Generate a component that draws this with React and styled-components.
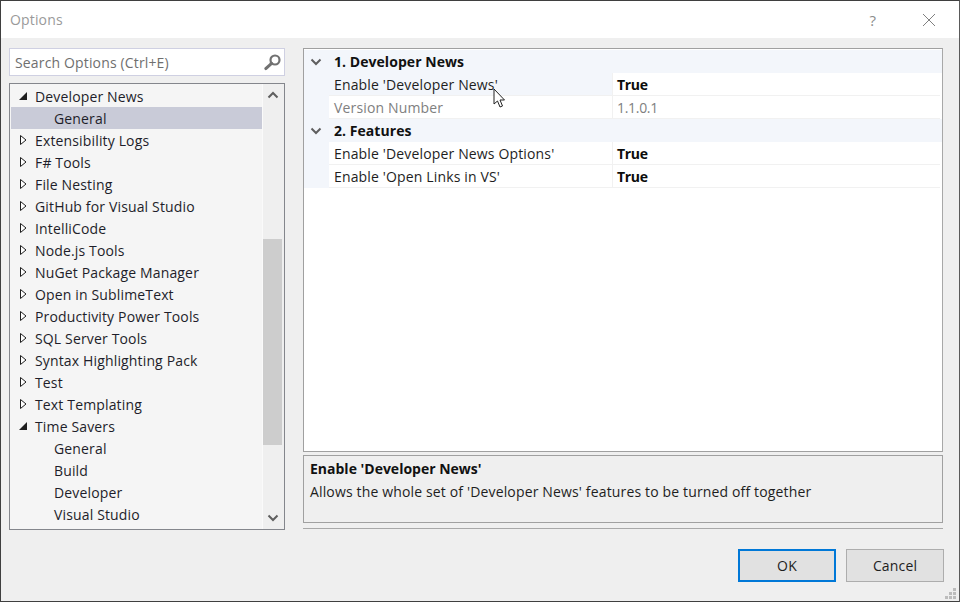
import React from 'react'
import styled, { createGlobalStyle } from 'styled-components'

const GlobalStyle = createGlobalStyle`
  html, body { margin: 0; padding: 0; background: #efefef; }
  * { box-sizing: border-box; }
`

const treeItems = [
  { label: 'Developer News', state: 'open' },
  { label: 'General', child: true, selected: true },
  { label: 'Extensibility Logs', state: 'closed' },
  { label: 'F# Tools', state: 'closed' },
  { label: 'File Nesting', state: 'closed' },
  { label: 'GitHub for Visual Studio', state: 'closed' },
  { label: 'IntelliCode', state: 'closed' },
  { label: 'Node.js Tools', state: 'closed' },
  { label: 'NuGet Package Manager', state: 'closed' },
  { label: 'Open in SublimeText', state: 'closed' },
  { label: 'Productivity Power Tools', state: 'closed' },
  { label: 'SQL Server Tools', state: 'closed' },
  { label: 'Syntax Highlighting Pack', state: 'closed' },
  { label: 'Test', state: 'closed' },
  { label: 'Text Templating', state: 'closed' },
  { label: 'Time Savers', state: 'open' },
  { label: 'General', child: true },
  { label: 'Build', child: true },
  { label: 'Developer', child: true },
  { label: 'Visual Studio', child: true },
]

const sections = [
  {
    title: '1. Developer News',
    rows: [
      { name: "Enable 'Developer News'", value: 'True', active: true },
      { name: 'Version Number', value: '1.1.0.1', muted: true },
    ],
  },
  {
    title: '2. Features',
    rows: [
      { name: "Enable 'Developer News Options'", value: 'True' },
      { name: "Enable 'Open Links in VS'", value: 'True' },
    ],
  },
]

const Dialog = styled.div`
  position: relative;
  width: 960px;
  height: 602px;
  display: flex;
  flex-direction: column;
  overflow: hidden;
  background: #efefef;
  border: 1px solid #3f3f3f;
  border-right-color: #5a5a5a;
  font-family: "Open Sans", "Liberation Sans", sans-serif;
  font-size: 14px;
  letter-spacing: 0.15px;
  color: #1e1e1e;
`

const TitleBar = styled.div`
  height: 37px;
  flex: none;
  display: flex;
  align-items: center;
  background: #fff;
  padding: 0 23px 0 9px;
`

const Title = styled.div`
  flex: 1;
  font-size: 14px;
  color: #9a9a9a;
`

const Help = styled.span`
  font-size: 15px;
  color: #8c8c8c;
  margin-right: 46px;
`

const Body = styled.div`
  flex: 1;
  display: flex;
  padding: 10px 16px 0 8px;
  gap: 18px;
`

const LeftColumn = styled.div`
  width: 276px;
  flex: none;
  display: flex;
  flex-direction: column;
  gap: 7px;
`

const SearchBox = styled.div`
  height: 28px;
  flex: none;
  display: flex;
  align-items: center;
  justify-content: space-between;
  padding: 0 3px 0 5px;
  background: #fff;
  border: 1px solid #cfd0e2;
  color: #6f6f6f;
`

const Tree = styled.div`
  height: 447px;
  display: flex;
  background: #f5f5f5;
  border: 1px solid #84868c;
`

const TreeList = styled.div`
  flex: 1;
  padding: 1px 0 0 1px;
  overflow: hidden;
`

const TreeRow = styled.div`
  height: 22px;
  display: flex;
  align-items: center;
  white-space: nowrap;
  padding-left: ${(p) => (p.$child ? '43px' : '7px')};
  background: ${(p) => (p.$selected ? '#c9cbd8' : 'transparent')};
  color: #1e1e2a;
`

const Twisty = styled.svg`
  width: 10px;
  height: 12px;
  margin-right: 7px;
  flex: none;
`

const Scrollbar = styled.div`
  width: 22px;
  flex: none;
  display: flex;
  flex-direction: column;
  align-items: center;
  background: #efefef;
  border-left: 1px solid #fafafa;
  padding-right: 2px;
`

const ArrowCell = styled.div`
  height: 22px;
  flex: none;
  display: flex;
  align-items: center;
  justify-content: center;
`

const ScrollSpace = styled.div`
  flex: none;
  height: ${(p) => p.$h}px;
  width: 100%;
  background: ${(p) => (p.$thumb ? '#cdcdcd' : 'transparent')};
`

const RightColumn = styled.div`
  flex: 1;
  display: flex;
  flex-direction: column;
`

const Grid = styled.div`
  height: 404px;
  flex: none;
  padding-top: 1px;
  background: #fff;
  border: 1px solid #a0a0a0;
  border-right-color: #a8a8a8;
`

const SectionHead = styled.div`
  height: 23px;
  display: flex;
  align-items: center;
  background: #f3f6fb;
  font-weight: 700;
  letter-spacing: 0.05px;
  color: #111;
`

const Gutter = styled.div`
  width: 25px;
  flex: none;
  display: flex;
  align-items: center;
  justify-content: center;
  align-self: stretch;
  background: #f3f6fb;
  padding-right: 2px;
`

const SectionTitle = styled.span`
  padding-left: 5px;
`

const PropRow = styled.div`
  height: 23px;
  display: flex;
  margin-right: 2px;
`

const PropName = styled.div`
  width: 284px;
  flex: none;
  display: flex;
  align-items: center;
  padding-left: 5px;
  border-bottom: 1px solid #f1f1f1;
  border-right: 1px solid #f1f1f1;
  background: ${(p) => (p.$active ? '#f3f6fb' : '#fff')};
  color: ${(p) => (p.$muted ? '#808080' : '#1e1e1e')};
`

const PropValue = styled.div`
  flex: 1;
  display: flex;
  align-items: center;
  padding-left: 4px;
  border-bottom: 1px solid #f1f1f1;
  letter-spacing: -0.3px;
  font-weight: ${(p) => (p.$muted ? 400 : 700)};
  color: ${(p) => (p.$muted ? '#808080' : '#0c0c0c')};
`

const Description = styled.div`
  height: 68px;
  flex: none;
  margin-top: 3px;
  padding: 1px 6px;
  border: 1px solid #a0a0a0;
  line-height: 23px;
`

const DescriptionTitle = styled.div`
  font-weight: 700;
  letter-spacing: 0;
  color: #111;
`

const Rule = styled.div`
  height: 1px;
  flex: none;
  margin-top: 5px;
  background: #a8a8a8;
`

const Footer = styled.div`
  height: 72px;
  flex: none;
  display: flex;
  justify-content: flex-end;
  align-items: flex-start;
  gap: 10px;
  padding-top: 20px;
  margin-right: -1px;
`

const Button = styled.button`
  width: 98px;
  height: 33px;
  padding: 0;
  font: inherit;
  letter-spacing: inherit;
  color: #1e1e1e;
  background: #e1e1e1;
  border: ${(p) => (p.$primary ? '2px solid #0078d7' : '1px solid #adadad')};
`

const Cursor = styled.svg`
  position: absolute;
  left: 491px;
  top: 87px;
  width: 14px;
  height: 21px;
`

const Grip = styled.svg`
  position: absolute;
  right: 3px;
  bottom: 2px;
  width: 11px;
  height: 11px;
`

const Chevron = ({ up, color = '#5f5f5f' }) => (
  <svg width="12" height="8" viewBox="0 0 12 8">
    <path d={up ? 'M1.5 6.5 L6 2 L10.5 6.5' : 'M1.5 1.5 L6 6 L10.5 1.5'} fill="none" stroke={color} strokeWidth="2" />
  </svg>
)

const SearchIcon = () => (
  <svg width="18" height="18" viewBox="0 0 18 18">
    <circle cx="12" cy="7" r="4.5" fill="none" stroke="#717171" strokeWidth="2.2" />
    <path d="M8.6 10.4 L2.8 15.6" stroke="#717171" strokeWidth="3" strokeLinecap="round" />
  </svg>
)

const TreeToggle = ({ state }) => (
  <Twisty viewBox="0 0 10 12">
    {state === 'open' ? (
      <path d="M1 10 L9 10 L9 2 Z" fill="#1e1e1e" />
    ) : (
      <path d="M2.5 1.5 L8 6 L2.5 10.5 Z" fill="#fff" stroke="#1e1e1e" strokeWidth="1" />
    )}
  </Twisty>
)

const App = () => {
  return (
    <Dialog>
      <GlobalStyle />
      <TitleBar>
        <Title>Options</Title>
        <Help>?</Help>
        <svg width="14" height="14" viewBox="0 0 14 14">
          <path d="M1 1 L13 13 M13 1 L1 13" stroke="#808080" strokeWidth="1" />
        </svg>
      </TitleBar>

      <Body>
        <LeftColumn>
          <SearchBox>
            <span>Search Options (Ctrl+E)</span>
            <SearchIcon />
          </SearchBox>
          <Tree>
            <TreeList>
              {treeItems.map((item, i) => (
                <TreeRow key={i} $child={item.child} $selected={item.selected}>
                  {item.state && <TreeToggle state={item.state} />}
                  {item.label}
                </TreeRow>
              ))}
            </TreeList>
            <Scrollbar>
              <ArrowCell><Chevron up /></ArrowCell>
              <ScrollSpace $h={133} />
              <ScrollSpace $h={206} $thumb />
              <ScrollSpace $h={62} />
              <ArrowCell><Chevron /></ArrowCell>
            </Scrollbar>
          </Tree>
        </LeftColumn>

        <RightColumn>
          <Grid>
            {sections.map((section) => (
              <div key={section.title}>
                <SectionHead>
                  <Gutter><Chevron /></Gutter>
                  <SectionTitle>{section.title}</SectionTitle>
                </SectionHead>
                {section.rows.map((row) => (
                  <PropRow key={row.name}>
                    <Gutter />
                    <PropName $active={row.active} $muted={row.muted}>{row.name}</PropName>
                    <PropValue $muted={row.muted}>{row.value}</PropValue>
                  </PropRow>
                ))}
              </div>
            ))}
          </Grid>
          <Description>
            <DescriptionTitle>Enable 'Developer News'</DescriptionTitle>
            <div>Allows the whole set of 'Developer News' features to be turned off together</div>
          </Description>
          <Rule />
          <Footer>
            <Button $primary>OK</Button>
            <Button>Cancel</Button>
          </Footer>
        </RightColumn>
      </Body>

      <Cursor viewBox="0 0 14 21">
        <path d="M2 1 L2 16 L5.5 13 L8 19 L10.5 18 L8 12 L12.5 12 Z" fill="#fff" stroke="#222" strokeWidth="1" />
      </Cursor>
      <Grip viewBox="0 0 11 11">
        <path d="M8 0h3v3H8z M4 4h3v3H4z M8 4h3v3H8z M0 8h3v3H0z M4 8h3v3H4z M8 8h3v3H8z" fill="#bcbcbc" />
      </Grip>
    </Dialog>
  )
}

export default App
